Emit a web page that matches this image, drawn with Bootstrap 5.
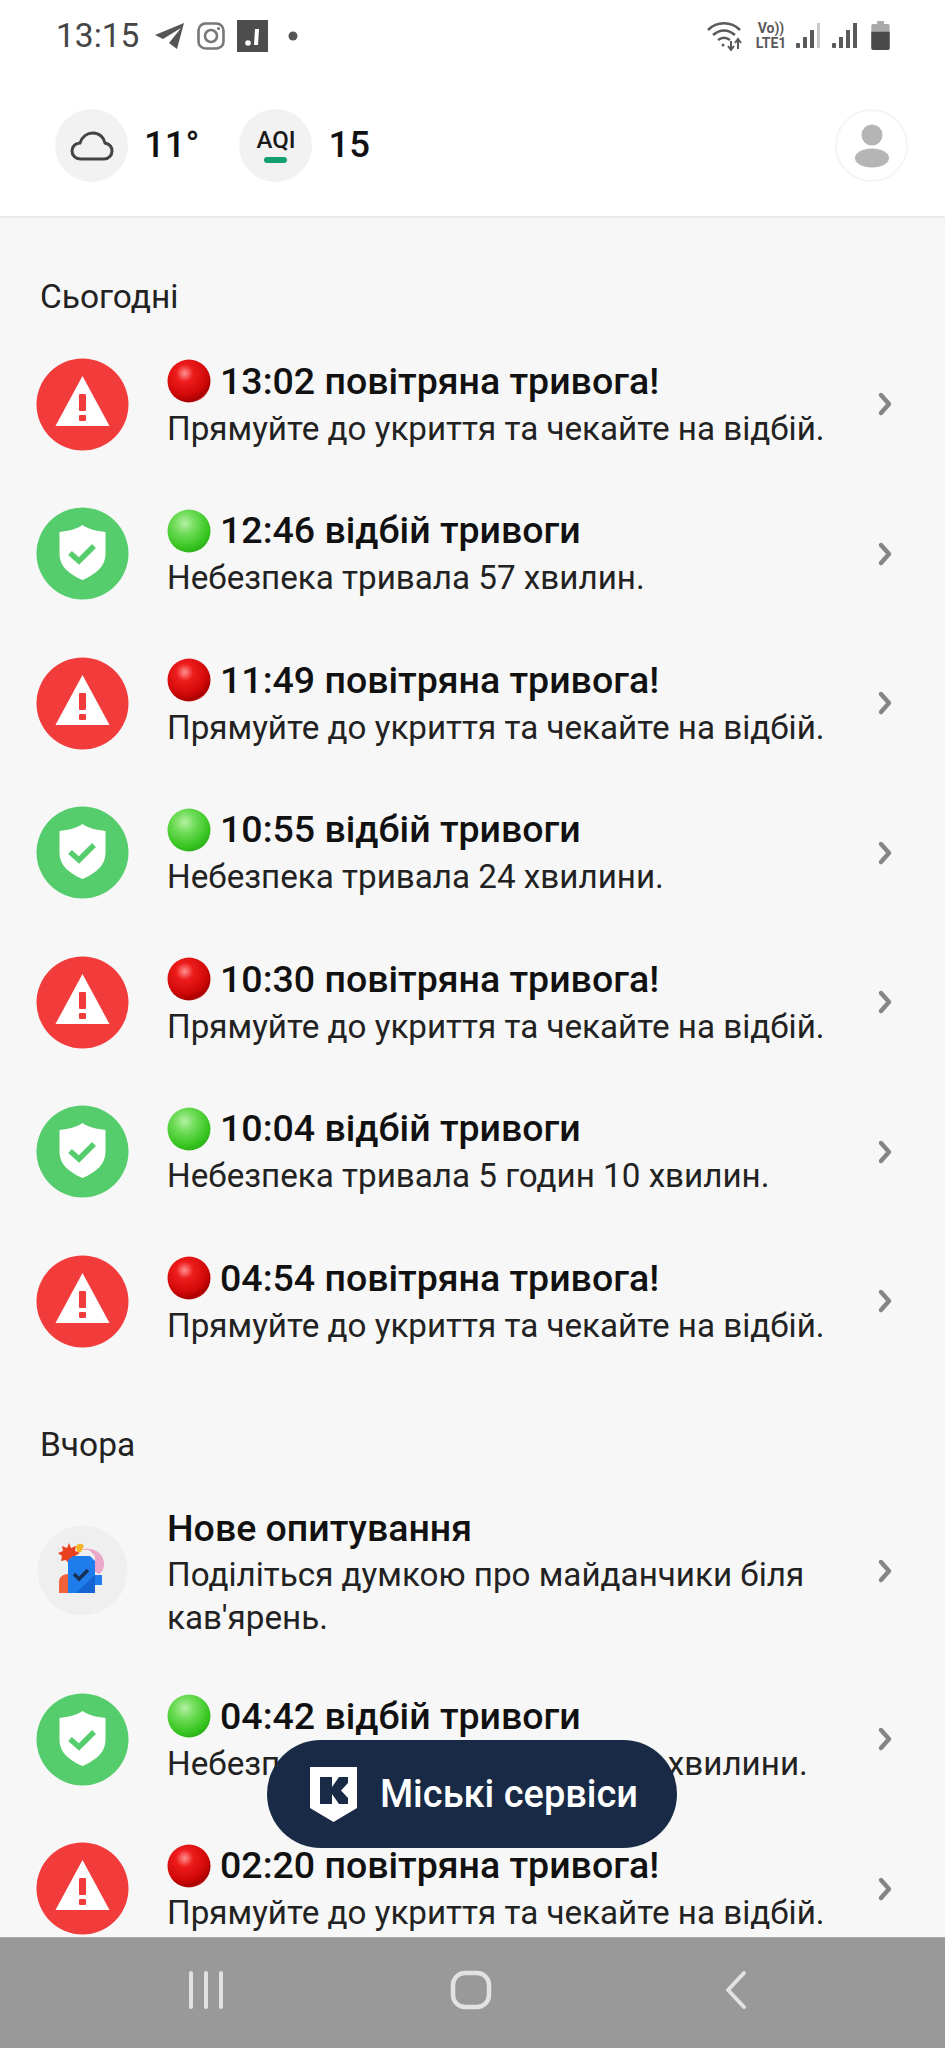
<!DOCTYPE html>
<html lang="uk"><head><meta charset="utf-8">
<link href="https://cdn.jsdelivr.net/npm/bootstrap@5.3.0/dist/css/bootstrap.min.css" rel="stylesheet">
<style>
html,body{margin:0;height:2048px;overflow:hidden}
body{font-family:Roboto,"Noto Sans",sans-serif;background:#f7f7f7;color:#111}
.screen{height:2048px;width:945px;position:relative}
.top-area{height:218px;background:#fff;border-bottom:2px solid #ebebeb;flex:none}
.status-line{height:71px;padding:0 55px 0 56px;color:#454545}
.clock{font-size:33.5px;line-height:1}
.gap-tg{margin-left:15px}.gap-ig{margin-left:12px}.gap-note{margin-left:12px}.gap-dot{margin-left:20px}
.gap-lte{margin-left:11px}.gap-s1{margin-left:8px}.gap-s2{margin-left:11px}.gap-bat{margin-left:14px}
.lte-stack{width:34px;line-height:1;font-weight:700;color:#5a5a5a;text-align:center}
.lte-top{font-size:14px}
.lte-low{font-size:14px;margin-top:1px}
.weather-line{height:73px;margin-top:38px;padding:0 37px 0 55px}
.round-chip{width:73px;height:73px;border-radius:50%;background:#f2f2f2;flex:none}
.round-chip.user-chip{background:#fff;border:2px solid #f4f5f6}
.aqi-chip{margin-left:40px}
.temp-num{font-size:36.5px;font-weight:500;line-height:1;margin-left:16px}
.aqi-label{font-size:24px;font-weight:500;line-height:1;color:#1a1a1a}
.aqi-dash{width:23px;height:6px;border-radius:3px;background:#12a06c;margin-top:5px}
.feed{flex:1 1 auto;overflow:hidden;min-height:0}
.day-label{font-size:33.5px;line-height:36px;color:#222;padding-left:40px}
.day-first{margin-top:61px;margin-bottom:14.5px}
.day-next{margin-top:50.5px;margin-bottom:14px}
.feed-row{height:149.5px;padding:0 52px 0 36px}
.feed-row.tall-row{height:188px}
.tall-row .feed-body{padding-top:1px}
.tall-row .feed-text{line-height:43px}
.feed-icon{width:93px;height:93px;flex:none}
.feed-body{margin-left:38px;flex:1 1 auto;min-width:0}
.feed-title{font-size:37.5px;font-weight:500;line-height:49px;white-space:nowrap;color:#111}
.feed-text{font-size:33.2px;line-height:46.5px;color:#222}
.ball{width:44px;height:44px;margin-right:9px;flex:none}
.chevron{width:16px;height:26px;flex:none}
.pill-btn{left:267px;top:1740px;width:410px;height:108px;border-radius:54px;background:#182a45;color:#fff;font-size:38px;font-weight:500;gap:23px;padding-left:4px}
.nav-strip{height:111px;background:#999;flex:none;border-top:1px solid #aaa;padding:0 77px 6px 73px}
.nav-slot{flex:1 1 0}
</style></head>
<body>
<svg width="0" height="0" class="d-block" aria-hidden="true"><defs>
<radialGradient id="redg" cx=".4" cy=".32" r=".72"><stop offset="0" stop-color="#ff9090"/><stop offset=".28" stop-color="#ee1c1c"/><stop offset=".72" stop-color="#d00808"/><stop offset=".92" stop-color="#a80000"/><stop offset="1" stop-color="#d83a3a"/></radialGradient>
<radialGradient id="greeng" cx=".4" cy=".32" r=".72"><stop offset="0" stop-color="#b4f0a2"/><stop offset=".35" stop-color="#6fdc58"/><stop offset=".8" stop-color="#36c41f"/><stop offset="1" stop-color="#2aad18"/></radialGradient>
<symbol id="alarm" viewBox="0 0 93 93"><circle cx="46.5" cy="46.5" r="46" fill="#f23c3c"/><path d="M46.5 18 73.5 68h-54z" fill="#fff"/><rect x="43" y="36" width="7" height="17" rx="1" fill="#f23c3c"/><rect x="43" y="57" width="7" height="6" rx="1" fill="#f23c3c"/></symbol>
<symbol id="safe" viewBox="0 0 93 93"><circle cx="46.5" cy="46.5" r="46" fill="#55cd6c"/><path d="M46.5 18c6 4 14 6 23 7v22c0 12-9 20-23 26-14-6-23-14-23-26V25c9-1 17-3 23-7z" fill="#fff"/><path d="M34 46l9 8 15-15" fill="none" stroke="#55cd6c" stroke-width="5.5"/></symbol>
<symbol id="redball" viewBox="0 0 44 44"><circle cx="22" cy="22" r="21.5" fill="url(#redg)"/></symbol>
<symbol id="greenball" viewBox="0 0 44 44"><circle cx="22" cy="22" r="21.5" fill="url(#greeng)"/></symbol>
<symbol id="chev" viewBox="0 0 16 26"><path d="M4 4l8 9-8 9" fill="none" stroke="#858585" stroke-width="4.4" stroke-linecap="round" stroke-linejoin="round"/></symbol>
</defs></svg>
<div class="screen d-flex flex-column">
 <div class="top-area">
  <div class="status-line d-flex align-items-center justify-content-between">
   <div class="d-flex align-items-center">
    <span class="clock">13:15</span>
    <svg class="gap-tg" width="31" height="27" viewBox="0 0 31 27"><path d="M1 13 30 1 23 27 15 21 27 6 9 17z" fill="#555"/></svg>
    <svg class="gap-ig" width="28" height="28" viewBox="0 0 28 28"><rect x="1.5" y="1.5" width="25" height="25" rx="7" fill="none" stroke="#777" stroke-width="2.6"/><circle cx="14" cy="14" r="6" fill="none" stroke="#777" stroke-width="2.6"/><circle cx="21.5" cy="6.5" r="1.6" fill="#777"/></svg>
    <svg class="gap-note" width="31" height="32" viewBox="0 0 31 32"><rect width="31" height="32" fill="#4d4d4d"/><path d="M18 9h4l-1 16h-4z" fill="#fff"/><circle cx="11" cy="23" r="2.8" fill="#fff"/></svg>
    <svg class="gap-dot" width="10" height="10" viewBox="0 0 10 10"><circle cx="5" cy="5" r="4.5" fill="#555"/></svg>
   </div>
   <div class="d-flex align-items-center">
    <svg width="36" height="30" viewBox="0 0 36 30" fill="none" stroke="#5a5a5a" stroke-width="2.6"><path d="M1 9C10 0 24 0 33 9"/><path d="M6 14c7-6 15-6 22 0"/><path d="M11 19c4-3 8-3 12 0"/><path d="M24 29v-9m-3 5 3 4 3-4" stroke-width="2"/><path d="M31 28v-10m-3 4 3-4 3 4" stroke-width="2"/><circle cx="16" cy="24" r="1.5" fill="#5a5a5a" stroke="none"/></svg>
    <div class="lte-stack gap-lte d-flex flex-column"><span class="lte-top">Vo))</span><span class="lte-low">LTE1</span></div>
    <svg class="gap-s1" width="25" height="26" viewBox="0 0 25 26"><rect x="0" y="20" width="4" height="5" rx="1" fill="#5a5a5a"/><rect x="7" y="14" width="4" height="11" fill="#5a5a5a"/><rect x="14" y="7" width="4" height="18" fill="#5a5a5a"/><rect x="21" y="0" width="3" height="25" fill="#c9c9c9"/></svg>
    <svg class="gap-s2" width="25" height="26" viewBox="0 0 25 26"><rect x="0" y="20" width="4" height="5" rx="1" fill="#5a5a5a"/><rect x="7" y="14" width="4" height="11" fill="#5a5a5a"/><rect x="14" y="7" width="4" height="18" fill="#5a5a5a"/><rect x="21" y="0" width="4" height="25" fill="#5a5a5a"/></svg>
    <svg class="gap-bat" width="19" height="29" viewBox="0 0 19 30"><path d="M6 0h7v3h4a2 2 0 0 1 2 2v23a2 2 0 0 1-2 2H2a2 2 0 0 1-2-2V5a2 2 0 0 1 2-2h4z" fill="#aaa"/><path d="M0 11h19v17a2 2 0 0 1-2 2H2a2 2 0 0 1-2-2z" fill="#4a4a4a"/></svg>
   </div>
  </div>
  <div class="weather-line d-flex align-items-center">
   <div class="round-chip d-flex align-items-center justify-content-center">
    <svg width="44" height="30" viewBox="0 0 44 30"><path d="M11 28C5 28 2 24 2 20c0-5 4-8 8-8 2-6 7-10 13-10 7 0 11 5 12 10 4 1 7 4 7 8s-3 8-8 8z" fill="none" stroke="#444" stroke-width="3"/></svg>
   </div>
   <span class="temp-num">11°</span>
   <div class="round-chip d-flex flex-column align-items-center justify-content-center aqi-chip">
    <span class="aqi-label">AQI</span><span class="aqi-dash"></span>
   </div>
   <span class="temp-num">15</span>
   <div class="round-chip user-chip ms-auto d-flex align-items-center justify-content-center">
    <svg width="36" height="44" viewBox="0 0 36 44"><circle cx="18" cy="11" r="10.5" fill="#b5b5b5"/><ellipse cx="18" cy="34" rx="17" ry="9.5" fill="#b5b5b5"/></svg>
   </div>
  </div>
 </div>
 <div class="feed">
  <div class="day-label day-first">Сьогодні</div>
  <div class="feed-row d-flex align-items-center"><svg class="feed-icon"><use href="#alarm"/></svg><div class="feed-body"><div class="feed-title d-flex align-items-center"><svg class="ball"><use href="#redball"/></svg>13:02 повітряна тривога!</div><div class="feed-text">Прямуйте до укриття та чекайте на відбій.</div></div><svg class="chevron"><use href="#chev"/></svg></div>
  <div class="feed-row d-flex align-items-center"><svg class="feed-icon"><use href="#safe"/></svg><div class="feed-body"><div class="feed-title d-flex align-items-center"><svg class="ball"><use href="#greenball"/></svg>12:46 відбій тривоги</div><div class="feed-text">Небезпека тривала 57 хвилин.</div></div><svg class="chevron"><use href="#chev"/></svg></div>
  <div class="feed-row d-flex align-items-center"><svg class="feed-icon"><use href="#alarm"/></svg><div class="feed-body"><div class="feed-title d-flex align-items-center"><svg class="ball"><use href="#redball"/></svg>11:49 повітряна тривога!</div><div class="feed-text">Прямуйте до укриття та чекайте на відбій.</div></div><svg class="chevron"><use href="#chev"/></svg></div>
  <div class="feed-row d-flex align-items-center"><svg class="feed-icon"><use href="#safe"/></svg><div class="feed-body"><div class="feed-title d-flex align-items-center"><svg class="ball"><use href="#greenball"/></svg>10:55 відбій тривоги</div><div class="feed-text">Небезпека тривала 24 хвилини.</div></div><svg class="chevron"><use href="#chev"/></svg></div>
  <div class="feed-row d-flex align-items-center"><svg class="feed-icon"><use href="#alarm"/></svg><div class="feed-body"><div class="feed-title d-flex align-items-center"><svg class="ball"><use href="#redball"/></svg>10:30 повітряна тривога!</div><div class="feed-text">Прямуйте до укриття та чекайте на відбій.</div></div><svg class="chevron"><use href="#chev"/></svg></div>
  <div class="feed-row d-flex align-items-center"><svg class="feed-icon"><use href="#safe"/></svg><div class="feed-body"><div class="feed-title d-flex align-items-center"><svg class="ball"><use href="#greenball"/></svg>10:04 відбій тривоги</div><div class="feed-text">Небезпека тривала 5 годин 10 хвилин.</div></div><svg class="chevron"><use href="#chev"/></svg></div>
  <div class="feed-row d-flex align-items-center"><svg class="feed-icon"><use href="#alarm"/></svg><div class="feed-body"><div class="feed-title d-flex align-items-center"><svg class="ball"><use href="#redball"/></svg>04:54 повітряна тривога!</div><div class="feed-text">Прямуйте до укриття та чекайте на відбій.</div></div><svg class="chevron"><use href="#chev"/></svg></div>
  <div class="day-label day-next">Вчора</div>
  <div class="feed-row tall-row d-flex align-items-center"><svg class="feed-icon" viewBox="0 0 93 93"><circle cx="46.5" cy="46.5" r="45" fill="#efefef"/><path d="M45 26c10-4 23 2 23 14 0 5-2 8-5 10l-4-2V32l-6-6z" fill="#eba6c8"/><path d="M23 69V58c0-5 4-8 9-8v19z" fill="#f2613a"/><path d="M33 19l2 5 5-2-1 5 5 2-5 3 2 5-5-1-3 4-3-4-5 1 1-5-4-3 5-2-1-5 5 2z" fill="#e9401f"/><path d="M40 22c3-3 6-3 8 0l-3 6h-4z" fill="#f6b32a"/><path d="M32 36l5-4h17l5 5v14h7v10h-7v8H32z" fill="#1f7cec"/><path d="M59 51v18H40z" fill="#1664d2"/><path d="M38 50l5 5 9-9" fill="none" stroke="#173155" stroke-width="3.5"/></svg><div class="feed-body"><div class="feed-title">Нове опитування</div><div class="feed-text">Поділіться думкою про майданчики біля кав'ярень.</div></div><svg class="chevron"><use href="#chev"/></svg></div>
  <div class="feed-row d-flex align-items-center"><svg class="feed-icon"><use href="#safe"/></svg><div class="feed-body"><div class="feed-title d-flex align-items-center"><svg class="ball"><use href="#greenball"/></svg>04:42 відбій тривоги</div><div class="feed-text">Небезпека тривала 2 години 22 хвилини.</div></div><svg class="chevron"><use href="#chev"/></svg></div>
  <div class="feed-row d-flex align-items-center"><svg class="feed-icon"><use href="#alarm"/></svg><div class="feed-body"><div class="feed-title d-flex align-items-center"><svg class="ball"><use href="#redball"/></svg>02:20 повітряна тривога!</div><div class="feed-text">Прямуйте до укриття та чекайте на відбій.</div></div><svg class="chevron"><use href="#chev"/></svg></div>
 </div>
 <div class="nav-strip d-flex align-items-center">
  <div class="nav-slot d-flex justify-content-center"><svg width="38" height="40" viewBox="0 0 38 40"><path d="M4 3v34M19 3v34M34 3v34" stroke="#e2e2e2" stroke-width="4" stroke-linecap="round"/></svg></div>
  <div class="nav-slot d-flex justify-content-center"><svg width="42" height="40" viewBox="0 0 42 40"><rect x="3" y="3" width="36" height="34" rx="12" fill="none" stroke="#e2e2e2" stroke-width="4.5"/></svg></div>
  <div class="nav-slot d-flex justify-content-center"><svg width="24" height="40" viewBox="0 0 24 40"><path d="M20 3 4 20l16 17" fill="none" stroke="#e2e2e2" stroke-width="4" stroke-linecap="round" stroke-linejoin="round"/></svg></div>
 </div>
 <div class="pill-btn position-absolute d-flex align-items-center justify-content-center">
  <svg width="47" height="55" viewBox="0 0 47 55"><path d="M0 0h47v41L23.5 55 0 41z" fill="#fff"/><path d="M10 10h12v10l7-10h9v6l-7 7.500 7 7.500v6h-9l-7-10v10H10z" fill="#182a45"/></svg>
  <span>Міські сервіси</span>
 </div>
</div>
</body></html>
